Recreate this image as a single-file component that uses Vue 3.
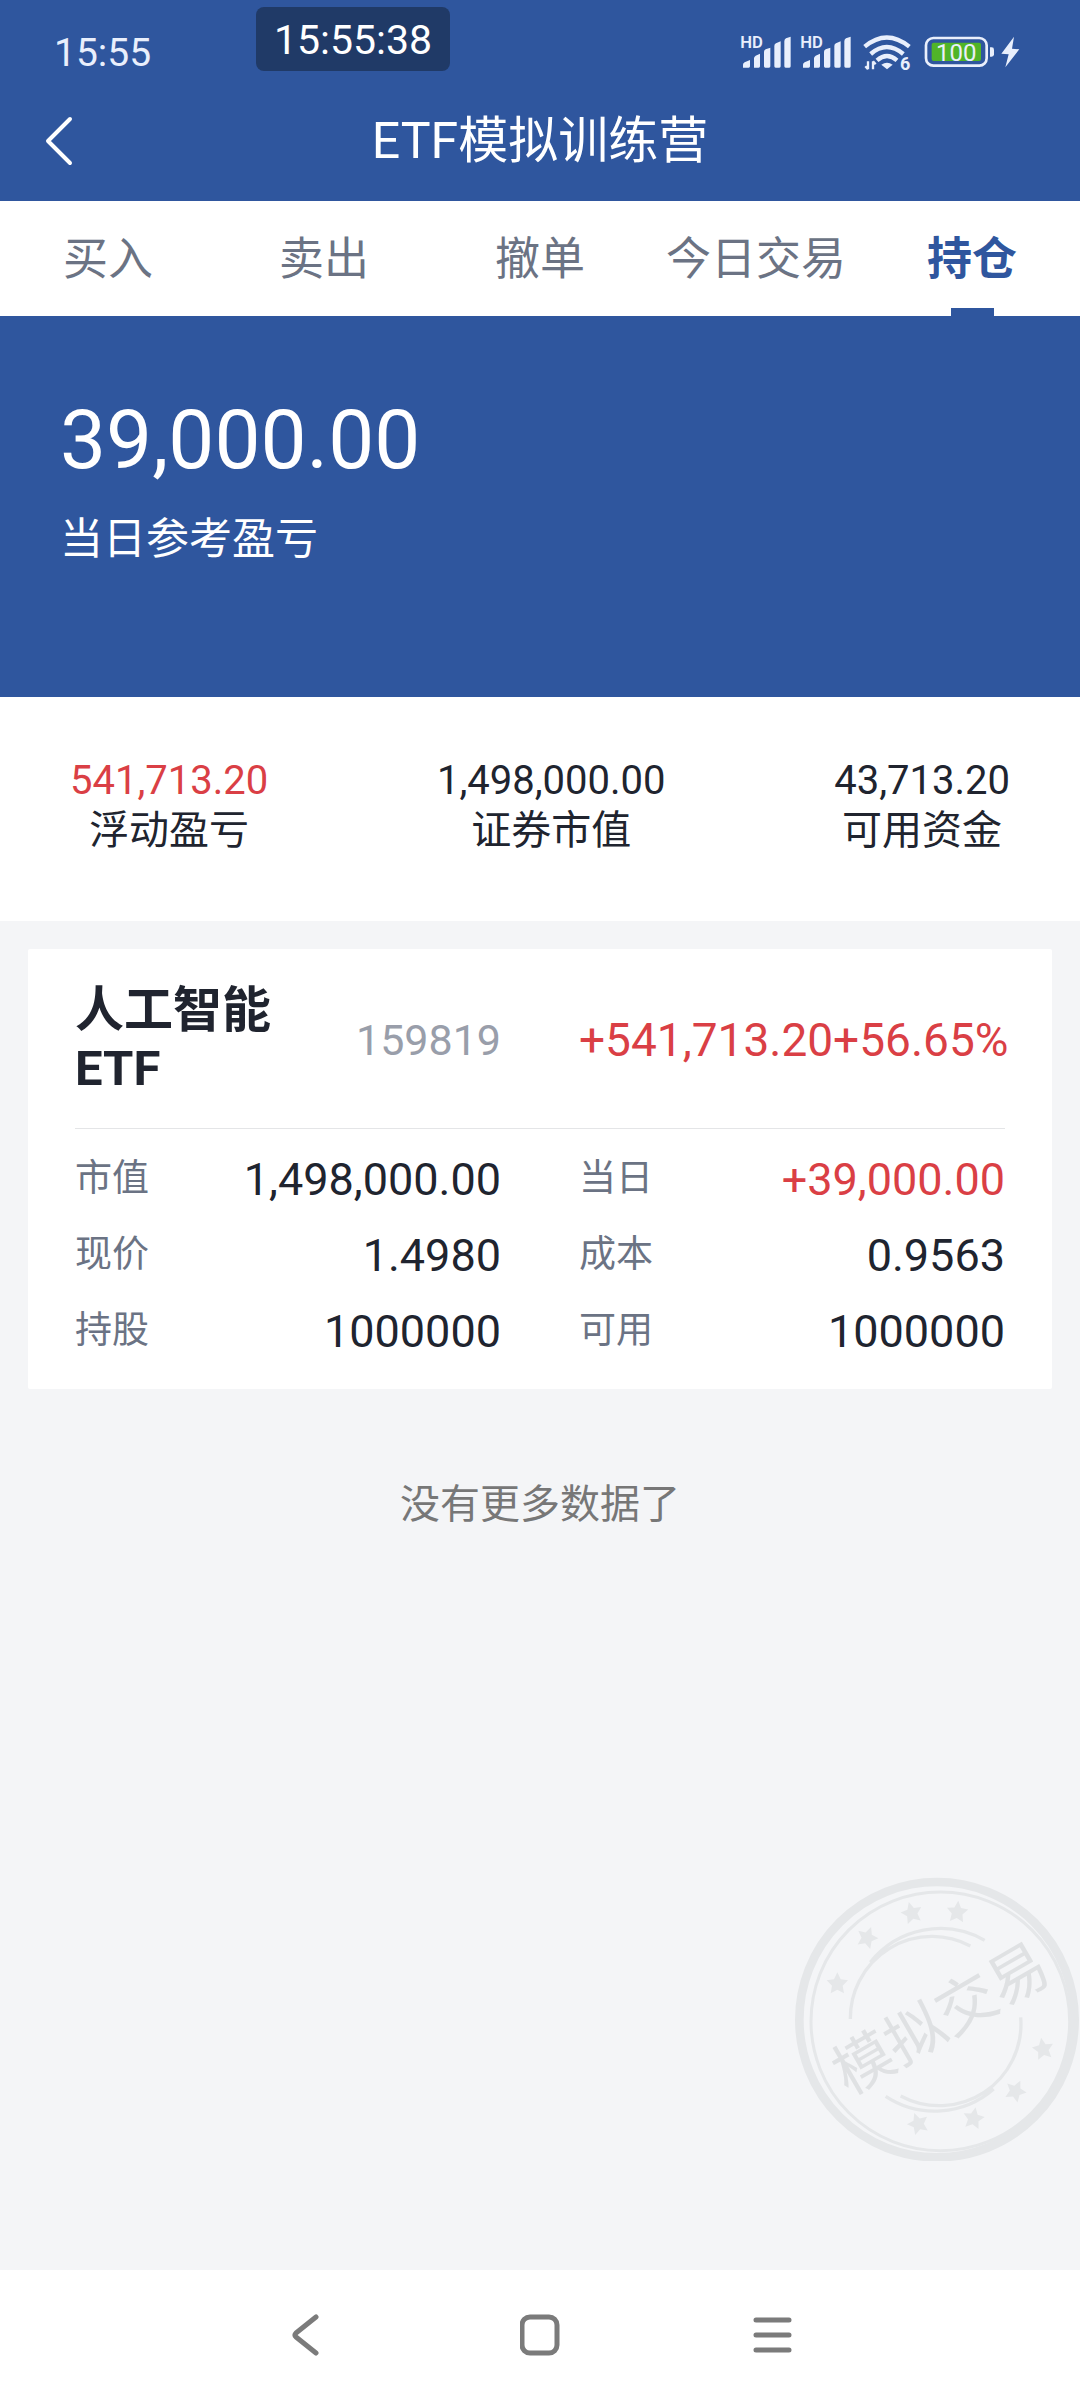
<script setup>
import { ref } from 'vue'

const tabs = ['买入', '卖出', '撤单', '今日交易', '持仓']
const active = ref('持仓')

const stats = [
  { label: '浮动盈亏', value: '541,713.20', up: true },
  { label: '证券市值', value: '1,498,000.00' },
  { label: '可用资金', value: '43,713.20' },
]

const details = [
  { label: '市值', value: '1,498,000.00' },
  { label: '当日', value: '+39,000.00', up: true },
  { label: '现价', value: '1.4980' },
  { label: '成本', value: '0.9563' },
  { label: '持股', value: '1000000' },
  { label: '可用', value: '1000000' },
]

const stars = [
  [171, 368, 0],
  [261, 230, 20],
  [394, 156, -15],
  [531, 153, 5],
  [788, 564, -10],
  [706, 690, 25],
  [580, 772, 10],
  [413, 788, -20],
]
</script>

<template>
  <div class="page">
    <header class="top">
      <div class="status">
        <time class="clock">15:55</time>
        <time class="pill">15:55:38</time>
        <div class="icons">
          <svg v-for="n in 2" :key="n" class="signal" viewBox="60 42 156 114" aria-hidden="true">
            <text x="61" y="84" font-size="50" font-weight="600">HD</text>
            <path d="M69 143V134Q69 129 74 127L90 120V139Q90 143 86 143ZM102 143V115Q102 110 107 107L120 101V139Q120 143 116 143H106ZM132 139V96Q132 90 137 88L151 83V139Q151 143 147 143H136Q132 143 132 139ZM163 139V78Q163 72 168 70L182 64V139Q182 143 178 143H167Q163 143 163 139ZM193 139V64Q193 58 198 55L212 50V139Q212 143 208 143H197Q193 143 193 139Z" />
          </svg>
          <svg class="wifi" viewBox="420 42 156 114" aria-hidden="true">
            <g fill="none" stroke="#e9effc" stroke-width="13">
              <path d="M434 80Q500 25 568 80" />
              <path d="M452 102Q500 60 550 102" />
              <path d="M471 121Q501 95 531 121" />
            </g>
            <path d="M484 134Q501 122 518 134L501 148Z" />
            <path d="M444 124V148M444 148L436 139M459 148V124M459 124L467 133" fill="none" stroke="#e9effc" stroke-width="7" />
            <text x="540" y="151" font-size="54" font-weight="700">6</text>
          </svg>
          <svg class="battery" viewBox="600 42 300 114" aria-hidden="true">
            <rect x="618" y="54" width="182" height="83" rx="22" fill="none" stroke="#e9effc" stroke-width="8" />
            <rect x="635" y="68" width="148" height="55" rx="6" fill="#50b428" />
            <path d="M810 82H815Q822 82 822 89V103Q822 110 815 110H810Z" />
            <text x="709" y="122" font-size="72" text-anchor="middle">100</text>
            <path d="M882 50L844 101L866 103L856 142L898 88L876 86Z" />
          </svg>
        </div>
      </div>
      <div class="titlebar">
        <button class="back" type="button" aria-label="返回">
          <svg viewBox="0 0 28 50" aria-hidden="true"><path d="M25 3L3 25L25 47" /></svg>
        </button>
        <h1>ETF模拟训练营</h1>
      </div>
    </header>

    <nav class="tabs">
      <button
        v-for="tab in tabs"
        :key="tab"
        type="button"
        :class="{ on: tab === active }"
        @click="active = tab"
      >{{ tab }}</button>
    </nav>

    <section class="hero">
      <strong>39,000.00</strong>
      <span>当日参考盈亏</span>
    </section>

    <section class="stats">
      <div v-for="s in stats" :key="s.label" class="stat">
        <span class="num" :class="{ up: s.up }">{{ s.value }}</span>
        <span class="cap">{{ s.label }}</span>
      </div>
    </section>

    <main>
      <article class="card">
        <div class="head">
          <div class="left">
            <h2>人工智能<br>ETF</h2>
            <span class="code">159819</span>
          </div>
          <div class="gain up"><span>+541,713.20</span><span>+56.65%</span></div>
        </div>
        <dl>
          <div v-for="d in details" :key="d.label">
            <dt>{{ d.label }}</dt>
            <dd :class="{ up: d.up }">{{ d.value }}</dd>
          </div>
        </dl>
      </article>
      <p class="end">没有更多数据了</p>

      <svg class="stamp" viewBox="44 49 852 852" aria-hidden="true">
        <g fill="none" stroke="#e5e7e9">
          <circle cx="470" cy="477" r="413" stroke-width="26" />
          <circle cx="480" cy="482" r="388" stroke-width="9" />
          <path d="M210 475A245 245 0 0 1 570 256M270 305A268 268 0 0 1 613 239" stroke-width="10" />
          <path d="M721 470A245 245 0 0 1 361 706M640 685A268 268 0 0 1 316 707" stroke-width="10" />
        </g>
        <path
          v-for="(s, i) in stars"
          :key="i"
          d="M0 -33L10 -12L32 -9L16 7L20 30L0 19L-20 30L-16 7L-32 -9L-10 -12Z"
          :transform="`translate(${s[0]} ${s[1]}) rotate(${s[2]})`"
          fill="#e5e7e9"
        />
        <text x="482" y="475" dy="62" font-size="178" text-anchor="middle" transform="rotate(-30 482 475)">模拟交易</text>
      </svg>
    </main>

    <nav class="sysnav">
      <button type="button" aria-label="后退">
        <svg viewBox="0 0 40 42"><path d="M29 3L9 19Q7 21 9 23L29 39" /></svg>
      </button>
      <button type="button" aria-label="主屏幕">
        <svg viewBox="0 0 40 42"><rect x="2" y="3" width="35" height="36" rx="8" /></svg>
      </button>
      <button type="button" aria-label="菜单">
        <svg viewBox="0 0 40 42"><path d="M3 6H36M3 21H36M3 36H36" /></svg>
      </button>
    </nav>
  </div>
</template>

<style>
body {
  margin: 0;
}
</style>

<style scoped>
.page {
  display: flex;
  flex-direction: column;
  min-height: 100vh;
  background: #f4f5f7;
  color: #20242f;
  font-family: Roboto, "Noto Sans CJK SC", sans-serif;
}
button {
  border: 0;
  padding: 0;
  background: none;
  font: inherit;
  color: inherit;
}
h1,
h2,
p,
dl,
dd {
  margin: 0;
}
.up {
  color: #da3f45;
}
.top {
  background: #2f569e;
  color: #fff;
}
.status {
  position: relative;
  display: flex;
  align-items: center;
  justify-content: space-between;
  box-sizing: border-box;
  height: 80px;
  padding: 26px 60px 0 54px;
}
.clock {
  font-size: 39px;
  line-height: 54px;
  color: #e9effc;
}
.pill {
  position: absolute;
  top: 7px;
  left: 256px;
  padding: 2px 18px 0;
  border-radius: 8px;
  background: #203a67;
  font-size: 41px;
  line-height: 62px;
}
.icons {
  display: flex;
  gap: 8px;
  fill: #e9effc;
}
.icons svg {
  height: 38px;
  overflow: visible;
}
.signal,
.wifi {
  width: 52px;
}
.battery {
  width: 100px;
}
.titlebar {
  display: grid;
  grid-template-columns: 120px 1fr 120px;
  align-items: center;
  height: 121px;
}
.back {
  display: flex;
  padding-left: 45px;
}
.back svg {
  width: 28px;
  height: 50px;
  fill: none;
  stroke: #fff;
  stroke-width: 4;
  stroke-linecap: round;
  stroke-linejoin: round;
}
h1 {
  font-size: 50px;
  line-height: 72px;
  font-weight: 400;
  text-align: center;
}
.tabs {
  display: flex;
  background: #fff;
}
.tabs button {
  display: flex;
  flex: 1 1 0;
  flex-direction: column;
  align-items: center;
  padding-top: 26px;
  font-size: 45px;
  line-height: 66px;
  white-space: nowrap;
  color: #6b7384;
}
.tabs button::after {
  content: "";
  width: 43px;
  height: 8px;
  margin-top: 15px;
}
.tabs .on {
  font-weight: 700;
  color: #2f569e;
}
.tabs .on::after {
  background: #2f569e;
}
.hero {
  display: flex;
  flex-direction: column;
  padding: 74px 60px 126px;
  background: #2f569e;
  color: #fff;
}
.hero strong {
  font-size: 82px;
  line-height: 100px;
  font-weight: 400;
}
.hero span {
  margin-top: 17px;
  font-size: 43px;
  line-height: 64px;
}
.stats {
  display: flex;
  justify-content: space-between;
  padding: 59px 70px 65px;
  background: #fff;
}
.stat {
  display: flex;
  flex-direction: column;
  align-items: center;
}
.num {
  font-size: 40px;
  line-height: 50px;
}
.cap {
  font-size: 40px;
  line-height: 50px;
}
main {
  position: relative;
  flex: 1;
  padding: 28px;
}
.card {
  padding: 0 47px 20px;
  border-radius: 2px;
  background: #fff;
}
.head,
dl {
  display: grid;
  grid-template-columns: repeat(2, minmax(0, 1fr));
  column-gap: 78px;
}
.head {
  align-items: center;
  padding: 33px 0 30px;
  border-bottom: 1px solid #e4e5e7;
}
.left {
  display: flex;
  align-items: center;
  justify-content: space-between;
}
h2 {
  font-size: 49px;
  line-height: 58px;
  font-weight: 700;
}
.code {
  font-size: 43px;
  color: #999eaa;
}
.gain {
  font-size: 46px;
  white-space: nowrap;
}
dl {
  padding-top: 12px;
}
dl div {
  display: flex;
  align-items: center;
  justify-content: space-between;
  height: 76px;
}
dt {
  font-size: 37px;
  line-height: 52px;
  color: #6b7384;
}
dd {
  font-size: 45px;
}
.end {
  margin-top: 86px;
  font-size: 40px;
  line-height: 60px;
  text-align: center;
  color: #777;
}
.stamp {
  position: absolute;
  right: 1px;
  bottom: 109px;
  width: 284px;
  height: 284px;
  fill: #dfe1e3;
}
.sysnav {
  display: flex;
  height: 130px;
  padding: 0 190px;
  background: #fff;
}
.sysnav button {
  display: flex;
  flex: 1;
  align-items: center;
  justify-content: center;
}
.sysnav svg {
  width: 40px;
  height: 42px;
  fill: none;
  stroke: #7b7b7b;
  stroke-width: 5;
  stroke-linecap: round;
  stroke-linejoin: round;
}
</style>
